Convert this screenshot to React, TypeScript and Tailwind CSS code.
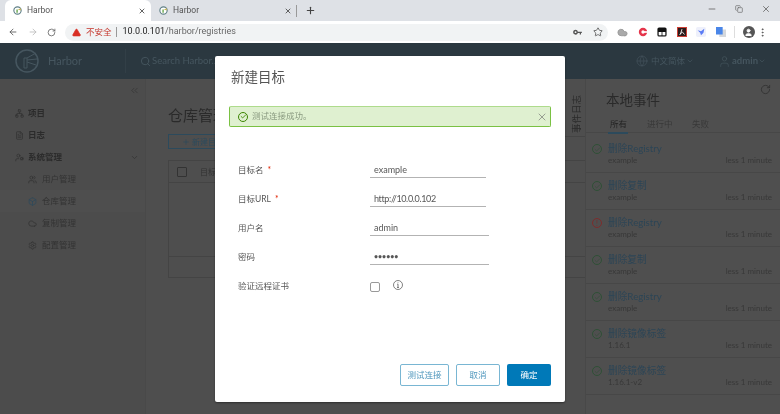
import {
  ArrowLeft,
  ArrowRight,
  Check,
  ChevronDown,
  ChevronsLeft,
  Cloud,
  Copy,
  FileText,
  Globe,
  Minus,
  MoreVertical,
  Network,
  Plus,
  RotateCw,
  Search,
  Settings,
  Star,
  TriangleAlert,
  User,
  UserCog,
  Users,
  Box,
  X,
} from 'lucide-react';

const cjk = "font-['Lato','Noto_Sans_CJK_SC',sans-serif]";

const events = [
  { title: '删除Registry', sub: 'example', ok: true },
  { title: '删除复制', sub: 'example', ok: true },
  { title: '删除Registry', sub: 'example', ok: false },
  { title: '删除复制', sub: 'example', ok: true },
  { title: '删除Registry', sub: 'example', ok: true },
  { title: '删除镜像标签', sub: '1.16.1', ok: true },
  { title: '删除镜像标签', sub: '1.16.1-v2', ok: true },
];

const extensions = ['cloud', 'target', 'tab', 'pdf', 'bird', 'translate'];

function Favicon() {
  return (
    <svg viewBox="0 0 16 16" className="h-[9px] w-[9px] shrink-0">
      <circle cx="8" cy="8" r="6.5" fill="#fff" stroke="#5f7f86" strokeWidth="2" />
      <path d="M6 12V6h2.500v6z" fill="#6aa84f" />
      <path d="M8.500 6 14 4v4z" fill="#c9b458" />
    </svg>
  );
}

function Tab({ active }: { active?: boolean }) {
  return (
    <div
      className={`flex h-[21px] w-[146px] items-center pl-[8px] pr-[5px] ${
        active ? 'rounded-t-[6px] bg-white' : ''
      }`}
    >
      <Favicon />
      <span className="ml-[5px] flex-1 font-['Roboto',sans-serif] text-[8.500px] text-[#555]">Harbor</span>
      <X className="h-[8px] w-[8px] text-[#444]" strokeWidth={2.5} />
    </div>
  );
}

function ExtensionIcon({ name }: { name: string }) {
  if (name === 'cloud') {
    return <Cloud className="h-[11px] w-[11px] fill-[#aaa] text-[#999]" />;
  }
  if (name === 'target') {
    return (
      <svg viewBox="0 0 12 12" className="h-[10px] w-[10px]">
        <circle cx="6" cy="6" r="5" fill="#e5344a" />
        <circle cx="6" cy="6" r="2" fill="#fff" />
        <path d="M6 5h6v2H6z" fill="#fff" />
      </svg>
    );
  }
  if (name === 'tab') {
    return (
      <svg viewBox="0 0 12 12" className="h-[10px] w-[10px]">
        <rect x="0.500" y="0.500" width="11" height="11" rx="2" fill="#111" />
        <rect x="2" y="6" width="3.500" height="4" fill="#fff" />
        <rect x="6.500" y="6" width="3.500" height="4" fill="#fff" />
      </svg>
    );
  }
  if (name === 'pdf') {
    return (
      <svg viewBox="0 0 12 12" className="h-[10px] w-[10px]">
        <rect x="0.500" y="0.500" width="11" height="11" fill="#2b1a1a" stroke="#d9362b" />
        <path d="M6 2.500 4 9M6 5.500 9 9M3 9l3-2.500" stroke="#fff" fill="none" />
      </svg>
    );
  }
  if (name === 'bird') {
    return (
      <svg viewBox="0 0 12 12" className="h-[10px] w-[10px]">
        <rect width="12" height="12" rx="2" fill="#eef0fb" />
        <path d="M2 4l4 1 4-3-1 5-3 3-1-3z" fill="#5b7cf5" />
      </svg>
    );
  }
  return (
    <svg viewBox="0 0 12 12" className="h-[10px] w-[10px]">
      <rect x="4" y="3" width="8" height="9" fill="#d5d8dc" />
      <rect width="8" height="9" fill="#4a86e8" />
    </svg>
  );
}

function KeyIcon() {
  return (
    <svg viewBox="0 0 14 10" className="ml-auto h-[7px] w-[10px]" fill="#555">
      <path
        fillRule="evenodd"
        d="M3.500 1a3.500 3.500 0 1 0 3.300 4.700H9.500V8h1.800V5.700h1.200V4H6.800A3.500 3.500 0 0 0 3.500 1zm0 2.200a1.300 1.300 0 1 1 0 2.600 1.300 1.300 0 0 1 0-2.600z"
      />
    </svg>
  );
}

function BrowserChrome() {
  return (
    <div className="shrink-0">
      <div className="flex h-[21px] items-start bg-[#dee1e6] pl-[5px]">
        <Tab active />
        <Tab />
        <div className="ml-[-1px] mt-[5px] h-[12px] w-px bg-[#999]" />
        <Plus className="ml-[8px] mt-[5px] h-[11px] w-[11px] text-[#444]" strokeWidth={2.5} />
        <div className="ml-auto flex items-center gap-[18px] pr-[9px] pt-[4px] text-[#666]">
          <Minus className="h-[10px] w-[10px]" />
          <Copy className="h-[8px] w-[8px]" />
          <X className="h-[10px] w-[10px]" />
        </div>
      </div>
      <div className="flex h-[22px] items-center bg-white pl-[8px]">
        <ArrowLeft className="h-[10px] w-[10px] text-[#555]" />
        <ArrowRight className="ml-[10px] h-[10px] w-[10px] text-[#bbb]" />
        <RotateCw className="ml-[9px] h-[9px] w-[9px] text-[#555]" />
        <div className="ml-[9px] flex h-[17px] w-[543px] items-center rounded-full bg-[#f1f3f4] pl-[7px] pr-[5px]">
          <TriangleAlert className="h-[9px] w-[9px] fill-[#d93025] text-[#d93025]" />
          <span className={`ml-[5px] text-[8.500px] text-[#c5352b] ${cjk}`}>不安全</span>
          <span className="ml-[4px] mr-[6px] h-[10px] w-px bg-[#999]" />
          <span className="font-['Roboto',sans-serif] text-[9px] text-[#666]">
            <span className="text-[#222]">10.0.0.101</span>/harbor/registries
          </span>
          <KeyIcon />
          <Star className="ml-[10px] h-[10px] w-[10px] text-[#555]" />
        </div>
        <div className="ml-[9px] flex items-center gap-[9.500px]">
          {extensions.map((name) => (
            <ExtensionIcon key={name} name={name} />
          ))}
        </div>
        <div className="ml-[8px] h-[12px] w-px bg-[#ddd]" />
        <div className="ml-[8px] flex h-[12px] w-[12px] items-center justify-center rounded-full bg-[#555]">
          <User className="h-[9px] w-[9px] fill-white text-white" />
        </div>
        <MoreVertical className="ml-[2px] h-[11px] w-[11px] text-[#555]" />
      </div>
    </div>
  );
}

function HarborHeader() {
  return (
    <header className={`flex h-[36px] shrink-0 items-center bg-[#2b3840] text-[#46565f] ${cjk}`}>
      <svg viewBox="0 0 24 24" className="ml-[15px] h-[24px] w-[24px]" fill="none" stroke="#46565f">
        <circle cx="12" cy="12" r="11" strokeWidth="1.500" />
        <path d="M9 19V9h3v10zM12 9l9-5M12 11l10-1M12 13l9 3" strokeWidth="1" />
      </svg>
      <span className="ml-[9px] text-[11px]">Harbor</span>
      <div className="ml-[43px] h-[24px] w-px bg-[#323f47]" />
      <Search className="ml-[14px] h-[11px] w-[11px]" />
      <span className="ml-[1px] text-[9.500px]">Search Harbor...</span>
      <div className="ml-auto flex items-center text-[8.500px]">
        <Globe className="h-[12px] w-[12px]" strokeWidth={1.200} />
        <span className="ml-[3px]">中文简体</span>
        <ChevronDown className="ml-[1px] h-[8px] w-[8px]" />
        <User className="ml-[24px] h-[13px] w-[13px]" strokeWidth={1.200} />
        <span className="ml-[1px] text-[9.500px] font-bold">admin</span>
        <ChevronDown className="mr-[14px] h-[8px] w-[8px]" />
      </div>
    </header>
  );
}

function NavRow({
  icon,
  label,
  sub,
  selected,
  trailing,
}: {
  icon: React.ReactNode;
  label: string;
  sub?: boolean;
  selected?: boolean;
  trailing?: React.ReactNode;
}) {
  return (
    <div
      className={`flex h-[22px] items-center text-[8.500px] ${
        sub ? 'gap-[5px] pl-[28px] text-[#333]' : 'gap-[4px] pl-[15px] font-semibold text-[#2b2b2b]'
      } ${selected ? 'bg-[#4e4e4e]' : ''}`}
    >
      {icon}
      <span>{label}</span>
      {trailing}
    </div>
  );
}

function Sidebar() {
  const ic = 'h-[9px] w-[9px] text-[#333]';
  return (
    <aside className={`w-[146px] shrink-0 border-r border-[#494949] bg-[#4c4c4c] ${cjk}`}>
      <div className="flex h-[23px] items-center justify-end pr-[5px]">
        <ChevronsLeft className="h-[11px] w-[11px] text-[#333]" strokeWidth={1.500} />
      </div>
      <NavRow icon={<Network className={ic} />} label="项目" />
      <NavRow icon={<FileText className={ic} />} label="日志" />
      <NavRow
        icon={<UserCog className={ic} />}
        label="系统管理"
        trailing={<ChevronDown className="ml-auto mr-[6px] h-[9px] w-[9px] text-[#333]" />}
      />
      <NavRow sub icon={<Users className={ic} />} label="用户管理" />
      <NavRow sub selected icon={<Box className="h-[9px] w-[9px] text-[#2c4a5c]" />} label="仓库管理" />
      <NavRow sub icon={<Cloud className={ic} />} label="复制管理" />
      <NavRow sub icon={<Settings className={ic} />} label="配置管理" />
    </aside>
  );
}

function RegistryPage() {
  return (
    <main className={`flex min-w-0 flex-1 flex-col pl-[22px] ${cjk}`}>
      <h1 className="mt-[24px] h-[28px] text-[15px] leading-[24px] text-[#2a2a2a]">仓库管理</h1>
      <div className="mt-[3px] flex h-[15px] w-[70px] items-center justify-center border border-[#2c4a5c] text-[8px] text-[#2c4a5c]">
        <Plus className="mr-[2px] h-[8px] w-[8px]" />
        新建目标
      </div>
      <div className="mt-[11px] h-[118px] border-y border-l border-[#444]">
        <div className="flex h-[22px] items-center border-b border-[#444] pl-[8px] text-[8px] text-[#333]">
          <span className="h-[10px] w-[10px] rounded-[1px] border border-[#333]" />
          <span className="ml-[13px]">目标名</span>
        </div>
        <div className="h-[74px] border-b border-[#444]" />
      </div>
    </main>
  );
}

function EventLogTab() {
  return (
    <div className={`absolute right-[195px] top-0 flex h-[58px] w-[20px] justify-end border-b border-[#444] pt-[14px] ${cjk}`}>
      <span className="h-[40px] rotate-180 pl-[3px] text-[9.500px] leading-[11px] text-[#2b2b2b] [text-orientation:sideways] [writing-mode:vertical-rl]">
        事件日志
      </span>
    </div>
  );
}

function EventRow({ title, sub, ok }: { title: string; sub: string; ok: boolean }) {
  return (
    <div className="flex h-[37px] border-b border-[#474747] pl-[6px] pr-[8px] pt-[6px]">
      <span
        className={`mt-[2px] flex h-[10px] w-[10px] items-center justify-center rounded-full border ${
          ok ? 'border-[#2f4f36] text-[#2f4f36]' : 'border-[#7d2c2c] text-[#7d2c2c]'
        }`}
      >
        {ok ? (
          <Check className="h-[7px] w-[7px]" />
        ) : (
          <span className="text-[7px] leading-none">!</span>
        )}
      </span>
      <div className="ml-[6px] min-w-0 flex-1">
        <div className="text-[9.700px] leading-[13px] text-[#2c4556]">{title}</div>
        <div className="flex items-center justify-between text-[8px] leading-[10px] text-[#383838]">
          <span>{sub}</span>
          <span>less 1 minute</span>
        </div>
      </div>
    </div>
  );
}

function EventsPanel() {
  return (
    <section className={`relative w-[195px] shrink-0 border-l border-[#484848] bg-[#4f4f4f] ${cjk}`}>
      <RotateCw className="absolute right-[9px] top-[5px] h-[11px] w-[11px] text-[#333]" />
      <h2 className="pl-[20px] pt-[8px] text-[13.500px] leading-[26px] text-[#2a2a2a]">本地事件</h2>
      <div className="mt-[5px] flex h-[15px] items-start border-b border-[#474747] pl-[24px] text-[8.500px] text-[#383838]">
        <span className="relative h-[15px] w-[37px] text-[#222]">
          所有
          <span className="absolute -left-[2px] bottom-[-1px] h-[2px] w-[20px] bg-[#2c4a5c]" />
        </span>
        <span className="w-[45px]">进行中</span>
        <span>失败</span>
      </div>
      <div className="pt-[3px]">
        {events.map((event, i) => (
          <EventRow key={i} {...event} />
        ))}
      </div>
    </section>
  );
}

function Field({
  label,
  value,
  required,
  wide,
  password,
  tight,
}: {
  label: string;
  value: string;
  required?: boolean;
  wide?: boolean;
  password?: boolean;
  tight?: boolean;
}) {
  return (
    <div className="flex h-[29px] items-center">
      <label className="w-[132px] pt-[4px] text-[8.500px] text-[#565656]">
        {label}
        {required && <span className="ml-[4px] text-[#e12200]">*</span>}
      </label>
      <div
        className={`flex h-[18px] items-center border-b border-[#b3b3b3] pl-[4px] pt-[3px] text-[9px] text-[#565656] ${
          wide ? 'w-[119px]' : 'w-[116px]'
        } ${tight ? 'tracking-[-0.35px]' : ''}`}
      >
        {password ? <span className="text-[7px] font-bold">••••••</span> : value}
      </div>
    </div>
  );
}

function Modal() {
  return (
    <div
      className={`absolute left-[215px] top-[13px] flex h-[346px] w-[350px] flex-col rounded-[2px] bg-white px-[14px] shadow-[0_1px_2px_rgba(0,0,0,0.4)] ${cjk}`}
    >
      <h3 className="pl-[2px] pt-[11px] text-[13.500px] leading-[20px] text-[#555]">新建目标</h3>
      <div className="mt-[19px] flex h-[21px] items-center rounded-[2px] border border-[#7ac143] border-t-[#aedb8c] bg-[#dff0d0] pl-[8px] pr-[2px] text-[8.500px] text-[#8a9a80]">
        <span className="flex h-[10px] w-[10px] items-center justify-center rounded-full border border-[#3c8500] text-[#3c8500]">
          <Check className="h-[7px] w-[7px]" strokeWidth={3} />
        </span>
        <span className="ml-[4px] flex-1">测试连接成功。</span>
        <X className="h-[12px] w-[12px] text-[#666]" strokeWidth={1.200} />
      </div>
      <form className="mt-[27px] pl-[9px]">
        <Field label="目标名" value="example" required />
        <Field label="目标URL" value="http://10.0.0.102" required tight />
        <Field label="用户名" value="admin" wide />
        <Field label="密码" value="" wide password />
        <div className="flex h-[29px] items-center pt-[4px]">
          <label className="w-[132px] text-[8.500px] text-[#565656]">验证远程证书</label>
          <span className="h-[10px] w-[10px] rounded-[2px] border border-[#999]" />
          <svg viewBox="0 0 12 12" className="-mt-[3px] ml-[13px] h-[10px] w-[10px]" fill="none" stroke="#444">
            <circle cx="6" cy="6" r="5.400" strokeWidth="0.800" />
            <path d="M6 5v4M5 9h2M5.200 5H6M6 3v.800" strokeWidth="0.900" />
          </svg>
        </div>
      </form>
      <div className="mt-auto mb-[16px] flex justify-end gap-[7px] text-[8.500px]">
        <button className="h-[22px] w-[49px] rounded-[2px] border border-[#79b6d3] text-[#4f97bd]">测试连接</button>
        <button className="h-[22px] w-[44px] rounded-[2px] border border-[#79b6d3] text-[#4f97bd]">取消</button>
        <button className="h-[22px] w-[44px] rounded-[2px] bg-[#0079b8] text-white">确定</button>
      </div>
    </div>
  );
}

export default function App() {
  return (
    <div className="flex h-[414px] w-[780px] flex-col overflow-hidden bg-[#4e4e4e] blur-[0.35px]">
      <BrowserChrome />
      <div className="relative flex min-h-0 flex-1 flex-col">
        <HarborHeader />
        <div className="relative flex min-h-0 flex-1">
          <Sidebar />
          <RegistryPage />
          <EventLogTab />
          <EventsPanel />
        </div>
        <Modal />
      </div>
    </div>
  );
}
